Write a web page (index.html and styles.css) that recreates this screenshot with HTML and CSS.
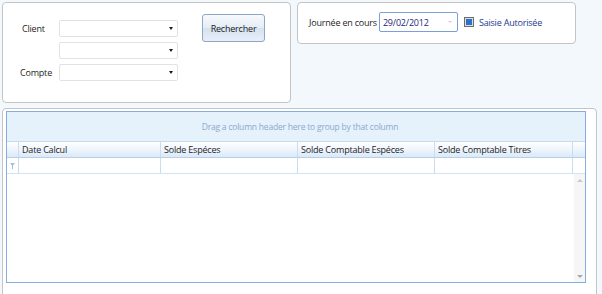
FILE: index.html
```html
<!DOCTYPE html>
<html lang="fr">
<head>
  <meta charset="UTF-8" />
  <title>Soldes</title>
  <link rel="stylesheet" href="styles.css">
</head>
<body>
  <div class="top-row">
    <div class="panel search-panel">
      <div class="search-fields">
        <span class="field-label client-label">Client</span>
        <div class="combo"><span class="arrow"></span></div>
        <span></span>
        <div class="combo"><span class="arrow"></span></div>
        <span class="field-label">Compte</span>
        <div class="combo"><span class="arrow"></span></div>
      </div>
      <button class="search-btn">Rechercher</button>
    </div>

    <div class="panel day-panel">
      <span class="field-label">Journée en cours</span>
      <div class="date-input">29/02/2012<span class="date-arrow"></span></div>
      <span class="checkbox"><span class="check-fill"></span></span>
      <span class="check-label">Saisie Autorisée</span>
    </div>
  </div>

  <div class="panel grid-panel">
    <div class="grid">
      <div class="group-panel">Drag a column header here to group by that column</div>
      <div class="header-row">
        <div class="cell indicator"></div>
        <div class="cell col-date">Date Calcul</div>
        <div class="cell col-a">Solde Espéces</div>
        <div class="cell col-b">Solde Comptable Espéces</div>
        <div class="cell col-c">Solde Comptable Titres</div>
        <div class="cell col-end"></div>
      </div>
      <div class="filter-row">
        <div class="cell indicator">
          <svg width="5" height="6" viewBox="0 0 5 6"><path d="M0 0h5L3 2.5V6H2V2.5z" fill="#a9bcd6"/></svg>
        </div>
        <div class="cell col-date"></div>
        <div class="cell col-a"></div>
        <div class="cell col-b"></div>
        <div class="cell col-c"></div>
        <div class="cell col-end"></div>
      </div>
      <div class="grid-body">
        <div class="rows"></div>
        <div class="scrollbar">
          <span class="scroll-up"></span>
          <span class="scroll-down"></span>
        </div>
      </div>
    </div>
  </div>
</body>
</html>
```

FILE: styles.css
```css
body {
  margin: 0;
  font-family: "Open Sans", "Noto Sans", sans-serif;
  font-size: 9px;
  letter-spacing: -0.2px;
  color: #1e1e1e;
  background-color: #f2f8fc;
  width: 602px;
  height: 294px;
  overflow: hidden;
}

.panel {
  background-color: #ffffff;
  border: 1px solid #c4c4c4;
  border-radius: 4px;
  box-sizing: border-box;
}

.top-row {
  display: flex;
  align-items: flex-start;
  padding: 2px 0 0 2px;
}

.search-panel {
  width: 289px;
  height: 101px;
  display: flex;
  align-items: flex-start;
}

.search-fields {
  display: grid;
  grid-template-columns: 56px 119px;
  row-gap: 5px;
  align-items: center;
  margin: 17px 0 0 0;
}

.field-label {
  white-space: nowrap;
}

.search-fields .field-label {
  padding-left: 17px;
}

.search-fields .client-label {
  align-self: start;
  margin-top: 2px;
  padding-left: 19px;
}

.combo {
  height: 17px;
  border: 1px solid #e2e2e2;
  border-radius: 2px;
  box-sizing: border-box;
  display: flex;
  align-items: center;
  justify-content: flex-end;
  padding-right: 4px;
}

.arrow {
  width: 0;
  height: 0;
  border-left: 2.5px solid transparent;
  border-right: 2.5px solid transparent;
  border-top: 3px solid #1a1a1a;
}

.search-btn {
  margin: 11px 0 0 24px;
  width: 63px;
  height: 28px;
  font-family: inherit;
  font-size: 9px;
  letter-spacing: -0.2px;
  color: #1e1e1e;
  border: 1px solid #8fa6c4;
  border-radius: 3px;
  background: linear-gradient(#f7fafd, #e4ecf6 50%, #d6e2f0 51%, #e8eff8);
  padding: 0;
}

.day-panel {
  margin-left: 6px;
  width: 279px;
  height: 42px;
  display: flex;
  align-items: center;
  padding-left: 11px;
  padding-bottom: 2px;
}

.date-input {
  margin-left: 2px;
  width: 79px;
  height: 20px;
  box-sizing: border-box;
  border: 1px solid #7ba0d6;
  border-radius: 2px;
  color: #1c2a7a;
  display: flex;
  align-items: center;
  padding-left: 3px;
  position: relative;
}

.date-arrow {
  position: absolute;
  right: 5px;
  top: 8px;
  border-left: 2px solid transparent;
  border-right: 2px solid transparent;
  border-top: 2px solid #c9d3e0;
}

.checkbox {
  margin-left: 6px;
  width: 10px;
  height: 10px;
  box-sizing: border-box;
  border: 1px solid #6e6e6e;
  background: #d8dde4;
  display: flex;
  align-items: center;
  justify-content: center;
}

.check-fill {
  width: 6px;
  height: 6px;
  background: #2f6fd0;
}

.check-label {
  margin-left: 5px;
  color: #1c3a8c;
}

.grid-panel {
  margin: 5px 0 0 2px;
  width: 595px;
  height: 190px;
  padding: 2px 0 0 3px;
}

.grid {
  width: 580px;
  height: 172px;
  border: 1px solid #86ade0;
  box-sizing: border-box;
  display: flex;
  flex-direction: column;
}

.group-panel {
  height: 29px;
  background-color: #e5f2fc;
  color: #8ea8cc;
  font-size: 8.5px;
  display: flex;
  align-items: center;
  justify-content: center;
  padding-left: 8px;
  border-bottom: 1px solid #c5daf2;
}

.header-row,
.filter-row {
  display: flex;
  height: 16px;
  box-sizing: border-box;
}

.header-row {
  background: linear-gradient(#ffffff, #f0f6fd 45%, #dbe9f8);
  border-bottom: 1px solid #b8cfec;
}

.filter-row {
  border-bottom: 1px solid #d3e2f4;
}

.cell {
  box-sizing: border-box;
  border-right: 1px solid #c9dcf2;
  display: flex;
  align-items: center;
  padding-left: 3px;
  white-space: nowrap;
}

.indicator {
  width: 12px;
  padding-left: 3px;
}

.col-date { width: 142px; }
.col-a { width: 137px; }
.col-b { width: 137px; }
.col-c { width: 138px; }
.col-end { flex: 1; border-right: none; }

.grid-body {
  flex: 1;
  display: flex;
}

.rows {
  flex: 1;
}

.scrollbar {
  width: 11px;
  background-color: #f6f6f6;
  display: flex;
  flex-direction: column;
  justify-content: space-between;
  align-items: center;
  padding: 5px 0 4px;
}

.scroll-up {
  border-left: 3px solid transparent;
  border-right: 3px solid transparent;
  border-bottom: 3px solid #c8c8c8;
}

.scroll-down {
  border-left: 3px solid transparent;
  border-right: 3px solid transparent;
  border-top: 3px solid #a8a8a8;
}
```
